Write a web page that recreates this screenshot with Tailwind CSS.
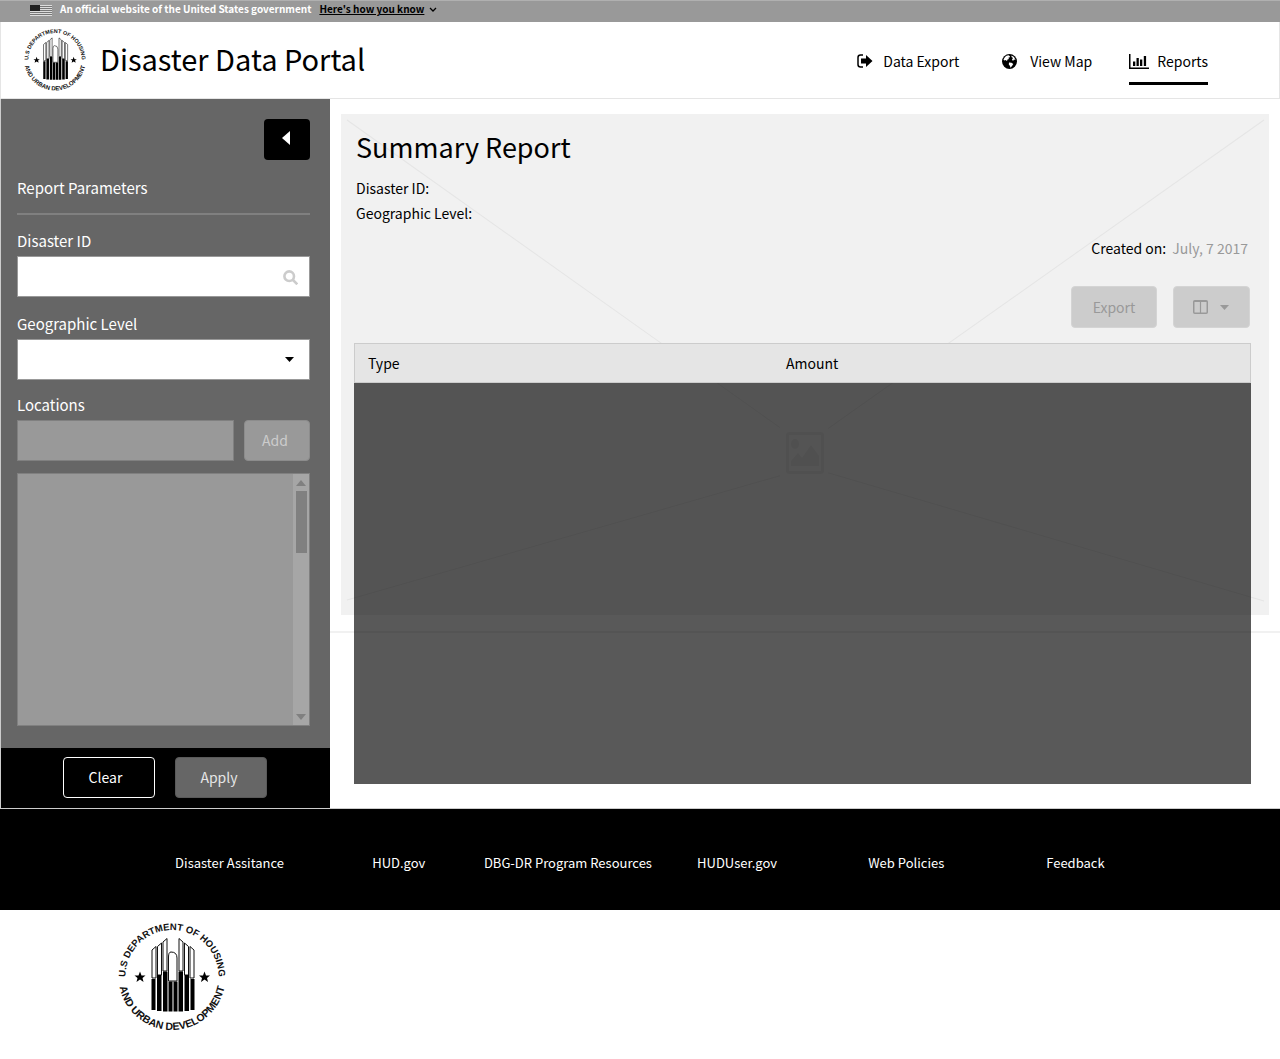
<!DOCTYPE html>
<html lang="en">
<head>
<meta charset="utf-8">
<meta name="viewport" content="width=device-width, initial-scale=1">
<title>Disaster Data Portal</title>
<script src="https://cdn.jsdelivr.net/npm/@tailwindcss/browser@4"></script>
</head>
<body class="min-h-screen bg-white font-['Noto_Sans_CJK_SC','Noto_Sans',sans-serif] text-sm text-black">

<!-- Shared seal artwork -->
<svg class="hidden" aria-hidden="true">
  <defs>
    <path id="arc-top" d="M16.400 123.100A93 93 0 1 1 199.600 123.100"/>
    <path id="arc-bottom" d="M1 107A107 107 0 1 0 215 107"/>
    <symbol id="seal" viewBox="0 0 216 216">
      <g font-family="Liberation Sans, sans-serif" font-weight="700" fill="#111">
        <text font-size="19" text-anchor="middle"><textPath href="#arc-top" startOffset="50%">U.S DEPARTMENT OF HOUSING</textPath></text>
        <text font-size="21" text-anchor="middle"><textPath href="#arc-bottom" startOffset="50%">AND URBAN DEVELOPMENT</textPath></text>
      </g>
      <g fill="#fff" stroke="#111" stroke-width="2">
        <path d="M68 110V54L76 47V110ZM79 104V47L87 40V104ZM90 96V38L98 31V96ZM122 96V31L130 38V96ZM133 104V40L141 47V104ZM144 110V47L152 54V110Z"/>
        <path d="M101 116V68Q101 58 106 58Q118 58 118 70V116Z"/>
      </g>
      <g fill="#000">
        <path d="M67 112h8v62h-8zM78 104h9v72h-9zM90 97h9v80h-9zM101 117h8v60h-8zM111 117h8v60h-8zM121 97h9v80h-9zM133 104h9v72h-9zM145 112h8v62h-8z"/>
        <path id="seal-star" d="M44 97l3 8h8l-6 5 2 8-7-5-7 5 2-8-6-5h8z"/>
        <use href="#seal-star" x="129"/>
      </g>
    </symbol>
  </defs>
</svg>

<!-- Government banner -->
<div class="flex h-[22px] items-start border-t border-[#b0b0b0] bg-[#999] pl-[30px] text-[10px] leading-4 font-bold">
  <svg class="mt-1 h-[11px] w-[22px]" viewBox="0 0 22 11" aria-hidden="true">
    <path fill="#ddd" d="M0 0h22v11H0z"/>
    <path fill="#777" d="M0 1h22v1H0zM0 3h22v1H0zM0 5h22v1H0zM0 7h22v1H0zM0 9h22v1H0z"/>
    <path fill="#222" d="M0 0h10v6H0z"/>
  </svg>
  <span class="ml-2 text-white">An official website of the United States government</span>
  <a href="#" class="ml-2 underline">Here's how you know</a>
  <svg class="mt-[6px] ml-[5px] h-[6px] w-2" viewBox="0 0 8 6" fill="none" stroke="#000" stroke-width="1.3" aria-hidden="true"><path d="M1 1l3 3 3-3"/></svg>
</div>

<!-- Site header -->
<header class="flex h-[77px] items-center justify-between border-x border-b border-[#e5e5e5] pr-[71px] pl-[23px]">
  <a href="#" class="flex items-center gap-[14px]">
    <svg class="size-[62px]" role="img" aria-label="HUD seal"><use href="#seal"/></svg>
    <span class="pb-[5px] text-[29px] leading-10">Disaster Data Portal</span>
  </a>
  <nav class="flex gap-[37px] pt-[3px] leading-5">
    <a href="#" class="mr-[6px] flex h-[46px] items-center pb-[1px]">
      <svg class="mr-[10px] h-[14px] w-4" viewBox="0 0 16 14" aria-hidden="true">
        <path d="M6 1H3.500Q1 1 1 3.500V10.500Q1 13 3.500 13H6" fill="none" stroke="#000" stroke-width="1.500"/>
        <path d="M4 4.500h5V1l6.500 6L9 13V9.500H4z"/>
      </svg>Data Export</a>
    <a href="#" class="flex h-[46px] items-center pb-[1px]">
      <svg class="mr-[13px] size-[15px]" viewBox="0 0 15 15" aria-hidden="true">
        <circle cx="7.500" cy="7.500" r="7.500"/>
        <path fill="#fff" d="M4.500 1.800L6.500 1.200 8 2.200 7.500 3.500 6.300 3.800 7 5 5.500 5.500 5 7 3.500 6 2.200 6.500 1.500 5.500 3 3zM9.500 1.500L12 3 13.500 6 12 5.500 11 7 10 5.500 11 4 9.500 3zM7 8.500L9.500 8.800 11.300 10 10 12 8.500 13.800 8 12 6.800 10.500z"/>
      </svg>View Map</a>
    <a href="#" aria-current="page" class="flex h-[46px] items-center border-b-3 border-black pt-[2px]">
      <svg class="mr-2 h-[15px] w-5" viewBox="0 0 20 15" aria-hidden="true"><path d="M0 0h1.500v13.500H20V15H0zM4 7.500h2.300V12H4zM7.500 4h2.300v8H7.500zM11 5.500h2.300V12H11zM14.800 2h2.300v10h-2.300z"/></svg>Reports</a>
  </nav>
</header>

<main class="flex">
  <!-- Report parameters -->
  <form class="flex w-[330px] shrink-0 flex-col border-l border-[#ccc] bg-[#666] text-[15px] text-white">
    <div class="flex-1 pr-5 pb-[22px] pl-4 leading-6">
      <div class="flex justify-end pt-5">
        <button type="button" aria-label="Collapse panel" class="flex h-[41px] w-[46px] items-center justify-center rounded bg-black pr-[2px] pb-[3px]">
          <svg class="h-[14px] w-2" viewBox="0 0 8 14" fill="#fff" aria-hidden="true"><path d="M8 0v14L0 7z"/></svg>
        </button>
      </div>
      <h2 class="mt-4">Report Parameters</h2>
      <hr class="mt-[13px] border-t-2 border-[#808080]">
      <label for="disaster" class="mt-[14px] block">Disaster ID</label>
      <div class="relative mt-[3px]">
        <input id="disaster" type="text" class="block h-[41px] w-full border border-[#999] bg-white pr-10 pl-3 text-sm text-black">
        <svg class="absolute top-[14px] right-3 size-[15px]" viewBox="0 0 15 15" fill="none" stroke="#ccc" stroke-width="2.600" aria-hidden="true"><circle cx="6.200" cy="6.200" r="4.800"/><path d="M10 10l4.300 4.300"/></svg>
      </div>
      <label for="level" class="mt-[15px] block">Geographic Level</label>
      <div class="relative mt-[3px]">
        <select id="level" class="block h-[41px] w-full appearance-none border border-[#999] bg-white px-3 text-sm text-black"><option></option></select>
        <svg class="pointer-events-none absolute top-[18px] right-4 h-[5px] w-[9px]" viewBox="0 0 9 5" aria-hidden="true"><path d="M0 0h9L4.500 5z"/></svg>
      </div>
      <label for="locations" class="mt-[13px] block">Locations</label>
      <div class="mt-[3px] flex gap-[10px]">
        <input id="locations" type="text" disabled class="h-[41px] min-w-0 flex-1 border border-[#808080] bg-[#999]">
        <button type="button" disabled class="h-[41px] w-[66px] rounded border border-[#8c8c8c] bg-[#999] pr-1 pb-[2px] text-sm text-[#ccc]">Add</button>
      </div>
      <div class="mt-3 flex h-[253px] justify-end border border-[#808080] bg-[#999]">
        <div class="flex w-4 flex-col items-center bg-[#a6a6a6] pt-[6px] pb-[5px]">
          <svg class="h-[6px] w-[10px]" viewBox="0 0 10 6" fill="#808080" aria-hidden="true"><path d="M0 6h10L5 0z"/></svg>
          <div class="mt-[5px] h-[62px] w-[11px] bg-[#808080]"></div>
          <svg class="mt-auto h-[6px] w-[10px]" viewBox="0 0 10 6" fill="#808080" aria-hidden="true"><path d="M0 0h10L5 6z"/></svg>
        </div>
      </div>
    </div>
    <div class="flex h-[60px] items-center justify-center gap-5 bg-black pr-[2px] pb-[2px] text-sm">
      <button type="reset" class="h-[41px] w-[92px] rounded border border-white pr-[6px]">Clear</button>
      <button type="submit" disabled class="h-[41px] w-[92px] rounded border border-[#595959] bg-[#666] pr-[3px] text-[#e5e5e5]">Apply</button>
    </div>
  </form>

  <!-- Summary report -->
  <section class="relative isolate min-w-0 flex-1 pt-7 pr-[29px] pb-6 pl-6">
    <!-- Placeholder backdrop -->
    <div class="absolute top-[15px] right-[11px] left-[11px] -z-10 h-[501px] bg-[#f1f1f1]">
      <svg class="absolute inset-0 size-full" viewBox="0 0 928 500" preserveAspectRatio="none" stroke="#e5e5e5" stroke-width="1" aria-hidden="true"><path d="M6 6L439 313M923 6L487 314M6 485L439 361M923 486L487 358"/></svg>
      <svg class="absolute top-[318px] left-1/2 h-[42px] w-[38px] -translate-x-1/2" viewBox="0 0 38 42" fill="#e5e5e5" aria-hidden="true"><rect x="1.500" y="1.500" width="35" height="39" rx="2" fill="none" stroke="#e5e5e5" stroke-width="3"/><ellipse cx="9" cy="12" rx="4" ry="5"/><path d="M5 34v-5l7-8 4 5 9-13 8 11v10z"/></svg>
    </div>
    <div class="absolute top-[532px] right-0 left-0 -z-10 h-[2px] bg-[#f1f1f1]"></div>

    <h1 class="pl-[2px] text-[27px] leading-10">Summary Report</h1>
    <div class="mt-[9px] pl-[2px] leading-[25px]">
      <p>Disaster ID:</p>
      <p>Geographic Level:</p>
    </div>
    <p class="mt-[10px] flex justify-end gap-[6px] pr-[3px] leading-6"><span>Created on:</span><span class="text-[#999]">July, 7 2017</span></p>
    <div class="mt-[26px] flex justify-end gap-4 pr-[1px]">
      <button type="button" disabled class="h-[42px] w-[86px] rounded border border-[#d4d4d4] bg-[#ccc] text-[#999]">Export</button>
      <button type="button" disabled aria-label="Choose columns" class="flex h-[42px] w-[77px] items-center justify-center gap-3 rounded border border-[#d4d4d4] bg-[#ccc] pr-[2px]">
        <svg class="h-[14px] w-[15px]" viewBox="0 0 15 14" fill="none" stroke="#999" aria-hidden="true"><rect x=".75" y=".75" width="13.500" height="12.500" rx="1" stroke-width="1.500"/><path d="M1 1.500h13M7.500 1v12" stroke-width="1.200"/></svg>
        <svg class="h-[5px] w-[9px]" viewBox="0 0 9 5" fill="#999" aria-hidden="true"><path d="M0 0h9L4.500 5z"/></svg>
      </button>
    </div>
    <table class="mt-[15px] w-full table-fixed border-separate border-spacing-0 text-left">
      <thead>
        <tr class="h-10">
          <th class="w-[419px] border-y border-l border-[#ccc] bg-[#e5e5e5] px-[13px] font-normal">Type</th>
          <th class="border-y border-r border-[#ccc] bg-[#e5e5e5] px-[13px] font-normal">Amount</th>
        </tr>
      </thead>
      <tbody>
        <tr class="h-[401px]"><td colspan="2" class="bg-black/65"></td></tr>
      </tbody>
    </table>
  </section>
</main>

<footer>
  <nav class="grid h-[102px] grid-cols-6 items-center border-t border-[#ccc] bg-black pt-[6px] pr-[120px] pl-[145px] text-center text-[13px] leading-5 whitespace-nowrap text-white">
    <a href="#">Disaster Assitance</a>
    <a href="#">HUD.gov</a>
    <a href="#">DBG-DR Program Resources</a>
    <a href="#">HUDUser.gov</a>
    <a href="#">Web Policies</a>
    <a href="#">Feedback</a>
  </nav>
  <div class="pt-[13px] pb-6 pl-[118px]">
    <svg class="size-[108px]" role="img" aria-label="U.S. Department of Housing and Urban Development"><use href="#seal"/></svg>
  </div>
</footer>
</body>
</html>
